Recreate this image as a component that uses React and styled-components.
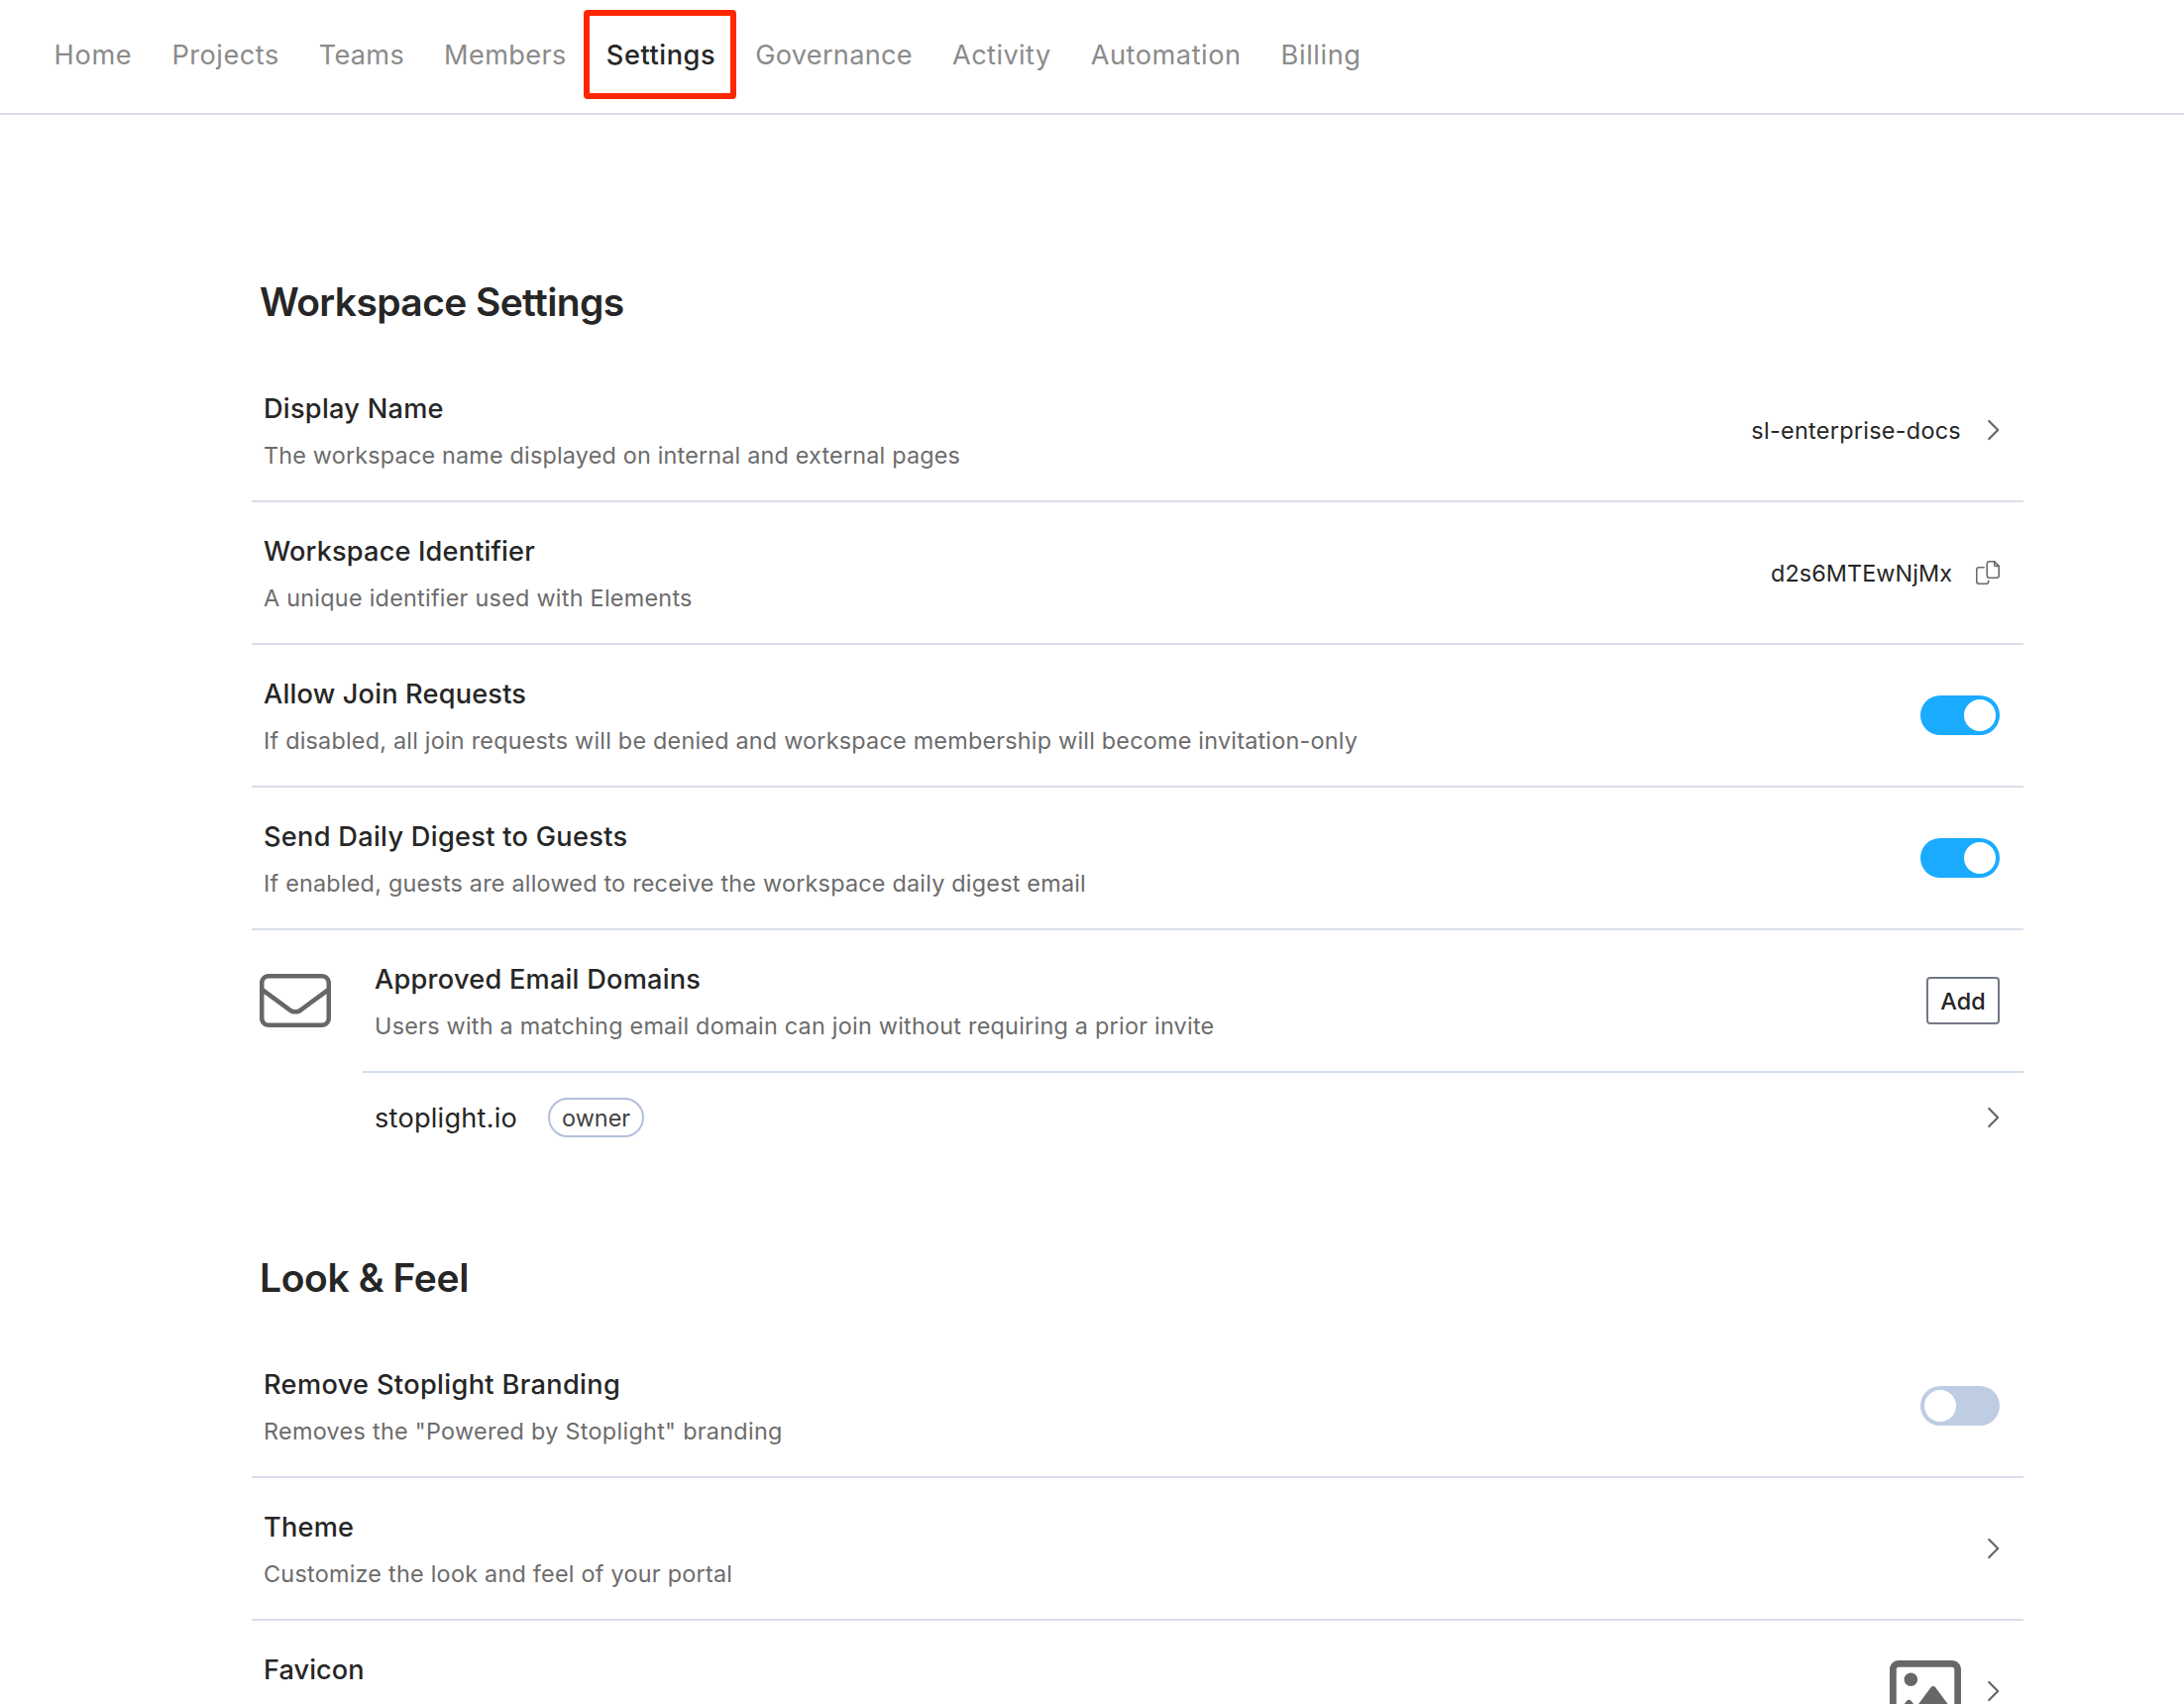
import React from 'react';
import styled, { createGlobalStyle } from 'styled-components';

const GlobalStyle = createGlobalStyle`
  *, *::before, *::after { box-sizing: border-box; }
  html, body { margin: 0; background: #fff; overflow: hidden; }
  body { font-family: Inter, "Liberation Sans", sans-serif; color: #262626; }
`;

const Page = styled.div`
  display: flex;
  flex-direction: column;
  width: 2204px;
  height: 1720px;
  overflow: hidden;
  background: #fff;
`;

const Header = styled.header`
  flex: none;
  height: 116px;
  border-bottom: 2px solid #d9deeb;
`;

const Nav = styled.nav`
  display: flex;
  gap: 40px;
  padding: 35px 0 0 54.6px;
`;

const NavItem = styled.a`
  position: relative;
  font-size: 27.2px;
  line-height: 41px;
  white-space: nowrap;
  letter-spacing: ${(p) => p.$tracking}px;
  font-weight: ${(p) => (p.$active ? 500 : 400)};
  color: ${(p) => (p.$active ? '#262626' : '#8b8b8b')};
`;

const Highlight = styled.span`
  position: absolute;
  top: -25px;
  left: -23px;
  width: 154px;
  height: 90px;
  border: 6px solid #ff2600;
  border-radius: 4px;
`;

const Main = styled.main`
  display: flex;
  flex-direction: column;
  gap: 93px;
  width: 1788px;
  margin-left: 254px;
  padding-top: 165px;
`;

const Section = styled.section`
  display: flex;
  flex-direction: column;
`;

const Heading = styled.h2`
  margin: 0 0 35px;
  padding-left: 8px;
  font-size: 39px;
  font-weight: 600;
  line-height: 47px;
  letter-spacing: ${(p) => p.$tracking}px;
`;

const Row = styled.div`
  display: flex;
  align-items: center;
  justify-content: space-between;
  height: 144px;
  padding: 0 24px 0 12px;
  border-bottom: 2px solid ${(p) => p.$line || '#dadfee'};
`;

const Labels = styled.div`
  display: flex;
  flex-direction: column;
  gap: 8px;
  align-self: flex-start;
  padding-top: 29px;
  white-space: nowrap;
`;

const Title = styled.div`
  font-size: 27.2px;
  font-weight: 500;
  line-height: 41px;
  letter-spacing: ${(p) => p.$tracking}px;
`;

const Description = styled.div`
  font-size: 23.4px;
  line-height: 37px;
  color: #6c6c6c;
  letter-spacing: ${(p) => p.$tracking}px;
`;

const Controls = styled.div`
  display: flex;
  align-items: center;
  gap: 24px;
`;

const Value = styled.span`
  padding-top: 1px;
  font-size: 23.4px;
  line-height: 37px;
  letter-spacing: ${(p) => p.$tracking}px;
`;

const Track = styled.button`
  display: flex;
  justify-content: ${(p) => (p.$on ? 'flex-end' : 'flex-start')};
  width: 80px;
  height: 40px;
  padding: 4px;
  border: 0;
  border-radius: 20px;
  background: ${(p) => (p.$on ? '#1aabff' : '#bfcde2')};
`;

const Knob = styled.span`
  width: 32px;
  height: 32px;
  border-radius: 50%;
  background: #fff;
`;

const AddButton = styled.button`
  display: flex;
  justify-content: center;
  width: 74px;
  height: 48px;
  padding: 4px 0 0;
  border: 2px solid #737888;
  border-radius: 4px;
  background: #fff;
  color: #262626;
  font: 500 23.4px/37px Inter, sans-serif;
`;

const Group = styled.div`
  display: grid;
  grid-template-columns: 112px 1fr;
`;

const GroupIcon = styled.div`
  display: flex;
  align-items: center;
  height: 142px;
  padding-left: 8px;
`;

const DomainRow = styled.div`
  display: flex;
  align-items: center;
  justify-content: space-between;
  height: 90px;
  padding: 0 24px 0 12px;
`;

const Domain = styled.div`
  display: flex;
  align-items: center;
  gap: 31px;
`;

const DomainName = styled.span`
  font-size: 27.2px;
  line-height: 41px;
  letter-spacing: 0.22px;
`;

const Badge = styled.span`
  display: flex;
  justify-content: center;
  width: 97px;
  height: 40px;
  border: 2px solid #b3bfd9;
  border-radius: 20px;
  color: #414141;
  font-size: 23.4px;
  line-height: 37px;
`;

const Icon = styled.svg`
  display: block;
  flex: none;
  fill: #676767;
`;

const Chevron = () => (
  <Icon width="15" height="24" viewBox="0 0 15 24">
    <path d="M4.2 3 13.2 12 4.2 21" fill="none" stroke="#676767" strokeWidth="2.2" strokeLinecap="round" strokeLinejoin="round" />
  </Icon>
);

const CopyIcon = () => (
  <Icon width="24" height="24" viewBox="0 0 512 512">
    <g fill="none" stroke="#6a6a6a" strokeWidth="34" strokeLinecap="round">
      <path d="M288 16H398L496 114V320a48 48 0 0 1-48 48H288a48 48 0 0 1-48-48V64a48 48 0 0 1 48-48z" />
      <path d="M398 20V90a24 24 0 0 0 24 24H492" />
      <path d="M176 144H64a48 48 0 0 0-48 48V448a48 48 0 0 0 48 48H224a48 48 0 0 0 48-48V432" />
    </g>
  </Icon>
);

const EnvelopeIcon = () => (
  <Icon width="72" height="54" viewBox="0 64 512 384">
    <path d="M64 96c-17.7 0-32 14.3-32 32v39.9L227.6 311.3c16.9 12.4 39.9 12.4 56.8 0L480 167.9V128c0-17.7-14.3-32-32-32H64zM32 207.6V384c0 17.7 14.3 32 32 32H448c17.7 0 32-14.3 32-32V207.6L303.3 337.1c-28.2 20.6-66.5 20.6-94.6 0L32 207.6zM0 128C0 92.7 28.7 64 64 64H448c35.3 0 64 28.7 64 64V384c0 35.3-28.7 64-64 64H64c-35.3 0-64-28.7-64-64V128z" />
  </Icon>
);

const ImageIcon = () => (
  <Icon width="72" height="63" viewBox="0 32 512 448">
    <path d="M152 120c-26.51 0-48 21.49-48 48s21.49 48 48 48s48-21.49 48-48S178.5 120 152 120zM448 32h-384C28.65 32 0 60.65 0 96v320c0 35.35 28.65 64 64 64h384c35.35 0 64-28.65 64-64V96C512 60.65 483.3 32 448 32zM464 409.3l-136.8-185.9C323.8 218.8 318.1 216 312 216c-6.113 0-11.82 2.768-15.21 7.379l-106.6 144.1l-37.09-46.1c-3.441-4.279-8.934-6.809-14.77-6.809c-5.842 0-11.33 2.529-14.78 6.809l-75.52 93.81L48 96c0-8.822 7.178-16 16-16h384c8.822 0 16 7.178 16 16V409.3z" />
  </Icon>
);

const Toggle = ({ on }) => (
  <Track type="button" role="switch" aria-checked={on} $on={on}>
    <Knob />
  </Track>
);

const SettingRow = ({ title, titleTracking = 0.25, text, textTracking = 0.21, line, children }) => (
  <Row $line={line}>
    <Labels>
      <Title $tracking={titleTracking}>{title}</Title>
      {text && <Description $tracking={textTracking}>{text}</Description>}
    </Labels>
    <Controls>{children}</Controls>
  </Row>
);

const navItems = [
  { label: 'Home', tracking: 0.65 },
  { label: 'Projects', tracking: 0.5 },
  { label: 'Teams', tracking: 0.25 },
  { label: 'Members', tracking: 0.35 },
  { label: 'Settings', tracking: 0.55, active: true },
  { label: 'Governance', tracking: 0.27 },
  { label: 'Activity', tracking: 0.42 },
  { label: 'Automation', tracking: 0.52 },
  { label: 'Billing', tracking: 0.6 },
];

export default function App() {
  return (
    <>
      <GlobalStyle />
      <Page>
        <Header>
          <Nav>
            {navItems.map(({ label, tracking, active }) => (
              <NavItem key={label} $tracking={tracking} $active={active}>
                {label}
                {active && <Highlight />}
              </NavItem>
            ))}
          </Nav>
        </Header>
        <Main>
          <Section>
            <Heading $tracking={-0.61}>Workspace Settings</Heading>
            <SettingRow
              title="Display Name"
              text="The workspace name displayed on internal and external pages"
              textTracking={0.18}
            >
              <Value $tracking={0.29}>sl-enterprise-docs</Value>
              <Chevron />
            </SettingRow>
            <SettingRow
              title="Workspace Identifier"
              titleTracking={0.15}
              text="A unique identifier used with Elements"
              textTracking={0.25}
            >
              <Value $tracking={0.07}>d2s6MTEwNjMx</Value>
              <CopyIcon />
            </SettingRow>
            <SettingRow
              title="Allow Join Requests"
              titleTracking={0.17}
              text="If disabled, all join requests will be denied and workspace membership will become invitation-only"
            >
              <Toggle on />
            </SettingRow>
            <SettingRow
              title="Send Daily Digest to Guests"
              titleTracking={0.28}
              text="If enabled, guests are allowed to receive the workspace daily digest email"
            >
              <Toggle on />
            </SettingRow>
            <Group>
              <GroupIcon>
                <EnvelopeIcon />
              </GroupIcon>
              <div>
                <SettingRow
                  title="Approved Email Domains"
                  titleTracking={0.22}
                  text="Users with a matching email domain can join without requiring a prior invite"
                  textTracking={0.235}
                  line="#d3deee"
                >
                  <AddButton type="button">Add</AddButton>
                </SettingRow>
                <DomainRow>
                  <Domain>
                    <DomainName>stoplight.io</DomainName>
                    <Badge>owner</Badge>
                  </Domain>
                  <Chevron />
                </DomainRow>
              </div>
            </Group>
          </Section>
          <Section>
            <Heading $tracking={-0.38}>Look &amp; Feel</Heading>
            <SettingRow
              title="Remove Stoplight Branding"
              titleTracking={0.34}
              text={'Removes the "Powered by Stoplight" branding'}
              textTracking={0.29}
            >
              <Toggle on={false} />
            </SettingRow>
            <SettingRow
              title="Theme"
              titleTracking={0.2}
              text="Customize the look and feel of your portal"
              textTracking={0.24}
            >
              <Chevron />
            </SettingRow>
            <SettingRow title="Favicon" titleTracking={0.05}>
              <ImageIcon />
              <Chevron />
            </SettingRow>
          </Section>
        </Main>
      </Page>
    </>
  );
}
